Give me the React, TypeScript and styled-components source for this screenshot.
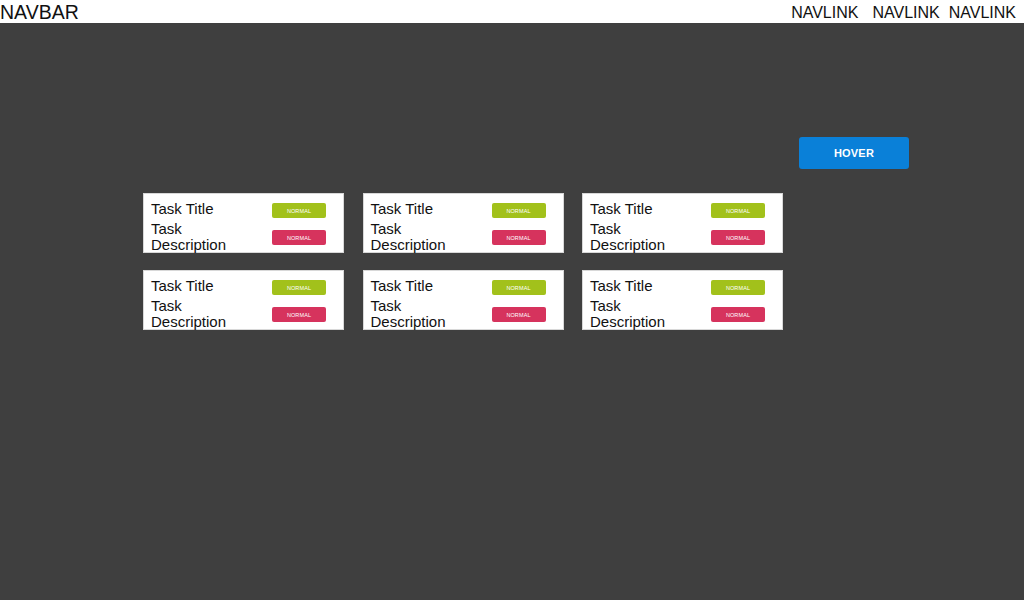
import React from 'react';
import styled, {createGlobalStyle} from 'styled-components';

const Global = createGlobalStyle`
html,body{margin:0;padding:0;background:#3f3f3f;}
body{font-family:"Liberation Sans", Arial, sans-serif;}
#root{min-height:100vh;}
`;

const Nav = styled.nav`
display:flex;align-items:center;justify-content:space-between;height:23px;
background:white;padding-right:8px;
> .brand{font-size:19.5px;line-height:22px;color:#111;}
`;
const Links = styled.div`
display:flex;gap:9px;
> a:first-child{margin-right:5px;}
`;
const NavLink = styled.a`
font-size:16px;line-height:22px;color:#111;text-decoration:none;padding-top:2px;
`;

const Main = styled.main`
padding:114px 115px 0 143px;
`;
const Toolbar = styled.div`
display:flex;justify-content:flex-end;
`;
const HoverButton = styled.button`
width:110px;height:32px;border:none;border-radius:3px;background:#0a80d8;color:white;
font-family:inherit;font-weight:bold;font-size:11px;letter-spacing:0.2px;cursor:pointer;
`;
const Grid = styled.div`
display:grid;grid-template-columns:repeat(3, 201px);column-gap:18.5px;row-gap:17px;margin-top:24px;
`;
const Card = styled.div`
display:flex;justify-content:space-between;height:60px;box-sizing:border-box;
background:white;border:1px solid #d8d8d8;padding:7px 17px 0 7px;
`;
const Text = styled.div`
display:flex;flex-direction:column;gap:4px;width:100px;color:#111;font-size:15px;line-height:16px;
`;
const Badges = styled.div`
display:flex;flex-direction:column;gap:12px;padding-top:2px;
`;
const Badge = styled.span<{ $color: string }>`
display:flex;align-items:center;justify-content:center;width:54px;height:15px;border-radius:2px;
background:${p => p.$color};color:white;font-size:5.5px;letter-spacing:0.1px;
`;

const tasks = [1, 2, 3, 4, 5, 6];

function App() {
  return (
    <>
      <Global/>
      <Nav>
        <span className="brand">NAVBAR</span>
        <Links>
          <NavLink href="#">NAVLINK</NavLink>
          <NavLink href="#">NAVLINK</NavLink>
          <NavLink href="#">NAVLINK</NavLink>
        </Links>
      </Nav>
      <Main>
        <Toolbar>
          <HoverButton>HOVER</HoverButton>
        </Toolbar>
        <Grid>
          {tasks.map(id =>
            <Card key={id}>
              <Text>
                <span>Task Title</span>
                <span>Task Description</span>
              </Text>
              <Badges>
                <Badge $color="#a2c11b">NORMAL</Badge>
                <Badge $color="#d6335d">NORMAL</Badge>
              </Badges>
            </Card>
          )}
        </Grid>
      </Main>
    </>
  );
}

export default App;
